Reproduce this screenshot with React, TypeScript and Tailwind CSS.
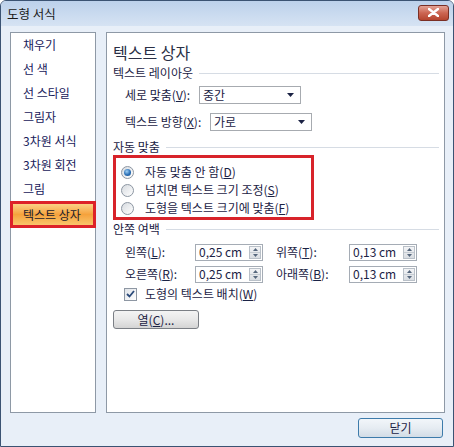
import React from 'react';

const FONT = "font-['Noto_Sans_CJK_KR','Noto_Sans',sans-serif]";

const menuItems = ['채우기', '선 색', '선 스타일', '그림자', '3차원 서식', '3차원 회전', '그림'];

function SectionTitle({ text }: { text: string }) {
  return (
    <div className="flex items-center h-[16px] leading-[16px]">
      <span className="text-[12px] text-[#1b2244]">{text}</span>
      <div className="flex-1 ml-[6px] border-t border-[#d6dce4]" />
    </div>
  );
}

function Dropdown({ value }: { value: string }) {
  return (
    <div className="w-[102px] h-[18px] border border-[#a7abb0] bg-white flex items-center justify-between pl-[3px] pr-[6px]">
      <span className="text-[12px] leading-none text-[#1b2244]">{value}</span>
      <svg width="7" height="4" viewBox="0 0 7 4">
        <path d="M0 0 H7 L3.5 4 Z" fill="#1b2244" />
      </svg>
    </div>
  );
}

function Spinner({ value }: { value: string }) {
  return (
    <div className="w-[68px] h-[17px] border border-[#a5acb5] bg-white flex items-center justify-between pl-[3px] pr-[1px]">
      <span className="text-[12px] leading-none text-[#1b2244]">{value}</span>
      <div className="w-[12px] h-[13px] flex flex-col border border-[#b9c0c8] bg-gradient-to-b from-[#f3f4f6] to-[#d9dde2]">
        <div className="flex-1 flex items-center justify-center border-b border-[#c6ccd3]">
          <svg width="5" height="3" viewBox="0 0 5 3">
            <path d="M0 3 H5 L2.5 0 Z" fill="#56677d" />
          </svg>
        </div>
        <div className="flex-1 flex items-center justify-center">
          <svg width="5" height="3" viewBox="0 0 5 3">
            <path d="M0 0 H5 L2.5 3 Z" fill="#56677d" />
          </svg>
        </div>
      </div>
    </div>
  );
}

function Radio({ checked, label, mn }: { checked?: boolean; label: string; mn: string }) {
  return (
    <div className="flex items-center h-[18px]">
      <div className="w-[13px] h-[13px] rounded-full border border-[#8c96a2] bg-gradient-to-br from-[#d7dbe0] to-[#ffffff] flex items-center justify-center">
        {checked && (
          <div className="w-[7px] h-[7px] rounded-full bg-[radial-gradient(circle_at_40%_35%,#9fd0f5,#2a6fb6_55%,#164e8c)]" />
        )}
      </div>
      <span className="ml-[11px] text-[12px] leading-none text-[#1b2244] whitespace-nowrap">
        {label}(<u>{mn}</u>)
      </span>
    </div>
  );
}

export default function App() {
  return (
    <div className={`w-[454px] h-[447px] flex flex-col border border-[#3b5373] rounded-t-[6px] bg-[#e8eff8] overflow-hidden ${FONT}`}>
      {/* title bar */}
      <div className="h-[25px] flex items-center justify-between pl-[6px] pr-[4px] bg-gradient-to-b from-[#bcd1eb] to-[#d6e3f3]">
        <span className="text-[12.5px] text-[#1a1a1a] mt-[1px]">도형 서식</span>
        <div className="w-[31px] h-[16px] mt-[-2px] rounded-[3px] border border-[#7a2f25] bg-gradient-to-b from-[#e3a396] via-[#cc6552] to-[#b5452f] flex items-center justify-center">
          <svg width="11" height="9" viewBox="0 0 11 9">
            <path d="M1 1 L10 8 M10 1 L1 8" stroke="#fff" strokeWidth="2.4" strokeLinecap="round" />
          </svg>
        </div>
      </div>

      {/* body */}
      <div className="flex-1 flex flex-col pt-[6px] pl-[9px] pr-[8px] pb-[8px]">
        <div className="flex-1 flex gap-[10px]">
          {/* left list */}
          <div className="w-[86px] border border-[#8e99a6] bg-white flex flex-col">
            {menuItems.map((item) => (
              <div key={item} className="h-[24px] flex items-center pl-[12px] text-[12px] text-[#17205a]">
                {item}
              </div>
            ))}
            <div className="h-[27px] -mx-px border-[3px] border-[#dd2229] flex items-center pl-[10px] text-[12px] text-[#1a1a2a] bg-gradient-to-b from-[#fbd284] via-[#f5a23c] to-[#f9c56a]">
              텍스트 상자
            </div>
          </div>

          {/* right panel */}
          <div className="flex-1 border border-[#8e99a6] bg-white pl-[6px] pr-[5px] pt-[9px] flex flex-col">
            <div className="h-[20px] leading-[20px] text-[16px] text-[#2a2f45]">텍스트 상자</div>
            <div className="mt-[3px]">
              <SectionTitle text="텍스트 레이아웃" />
            </div>
            <div className="mt-[5px] h-[18px] flex items-center pl-[12px]">
              <span className="w-[74px] text-[12px] text-[#1b2244] whitespace-nowrap">
                세로 맞춤(<u>V</u>):
              </span>
              <Dropdown value="중간" />
            </div>
            <div className="mt-[9px] h-[18px] flex items-center pl-[12px]">
              <span className="w-[85px] text-[12px] text-[#1b2244] whitespace-nowrap">
                텍스트 방향(<u>X</u>):
              </span>
              <Dropdown value="가로" />
            </div>
            <div className="mt-[8px]">
              <SectionTitle text="자동 맞춤" />
            </div>
            <div className="w-[201px] h-[65px] border-[3px] border-[#d8232a] pl-[5px] pt-[5px] flex flex-col">
              <Radio checked label="자동 맞춤 안 함" mn="D" />
              <Radio label="넘치면 텍스트 크기 조정" mn="S" />
              <Radio label="도형을 텍스트 크기에 맞춤" mn="F" />
            </div>
            <div className="mt-[1px]">
              <SectionTitle text="안쪽 여백" />
            </div>
            <div className="mt-[6px] pl-[12px] grid grid-cols-[70px_68px_13px_73px_68px] gap-y-[4px] items-center">
              <span className="text-[12px] text-[#1b2244]">
                왼쪽(<u>L</u>):
              </span>
              <Spinner value="0,25 cm" />
              <span />
              <span className="text-[12px] text-[#1b2244]">
                위쪽(<u>T</u>):
              </span>
              <Spinner value="0,13 cm" />
              <span className="text-[12px] text-[#1b2244]">
                오른쪽(<u>R</u>):
              </span>
              <Spinner value="0,25 cm" />
              <span />
              <span className="text-[12px] text-[#1b2244]">
                아래쪽(<u>B</u>):
              </span>
              <Spinner value="0,13 cm" />
            </div>
            <div className="mt-[3px] h-[16px] flex items-center pl-[11px]">
              <div className="w-[13px] h-[13px] border border-[#8e97a3] bg-gradient-to-br from-[#dfe3e8] to-[#ffffff] flex items-center justify-center">
                <svg width="9" height="8" viewBox="0 0 9 8">
                  <path d="M1 4 L3.5 6.5 L8 1" stroke="#2b4a7a" strokeWidth="1.8" fill="none" />
                </svg>
              </div>
              <span className="ml-[8px] text-[12px] text-[#1b2244]">
                도형의 텍스트 배치(<u>W</u>)
              </span>
            </div>
            <div className="mt-[8px] w-[86px] h-[19px] rounded-[3px] border border-[#7b7f85] bg-gradient-to-b from-[#f4f4f4] via-[#e8e8e8] to-[#d4d4d4] flex items-center justify-center text-[12px] text-[#1b2244]">
              열(<u>C</u>)...
            </div>
          </div>
        </div>

        {/* footer */}
        <div className="mt-[5px] flex justify-end pr-[2px]">
          <div className="w-[85px] h-[20px] rounded-[3px] border border-[#3d7bab] bg-gradient-to-b from-[#f2f6fa] via-[#e6ecf2] to-[#d2dce6] flex items-center justify-center text-[12px] text-[#1b2244]">
            닫기
          </div>
        </div>
      </div>
    </div>
  );
}
